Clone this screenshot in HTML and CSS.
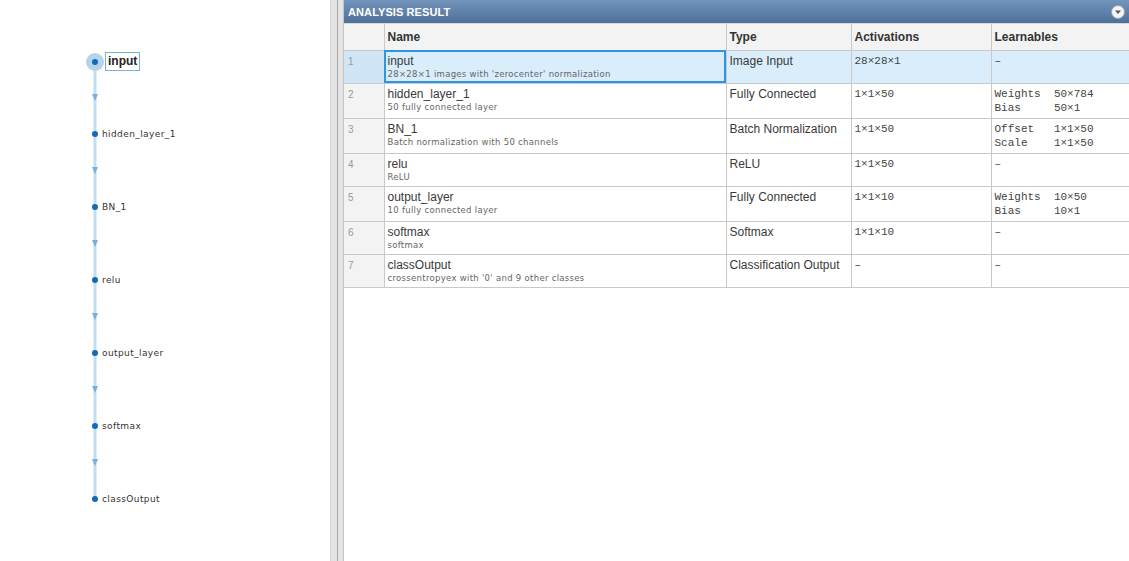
FILE: index.html
```html
<!DOCTYPE html>
<html>
<head>
<meta charset="utf-8">
<link rel="stylesheet" href="styles.css">
</head>
<body>
<div class="app">
  <div class="graph-panel">
    <div class="graph">
      <svg class="edges" width="330" height="561" viewBox="0 0 330 561">
        <line x1="95" y1="62" x2="95" y2="499" stroke="#c3ddf1" stroke-width="3"/>
        <g fill="#7aaedb">
          <polygon points="92,94 98,94 95,101"/>
          <polygon points="92,167 98,167 95,174"/>
          <polygon points="92,240 98,240 95,247"/>
          <polygon points="92,313 98,313 95,320"/>
          <polygon points="92,386 98,386 95,393"/>
          <polygon points="92,459 98,459 95,466"/>
        </g>
        <circle cx="95" cy="62" r="9" fill="#b5d4ec"/>
        <g fill="#1569b9">
          <circle cx="95" cy="62" r="3"/>
          <circle cx="95" cy="134" r="3"/>
          <circle cx="95" cy="207" r="3"/>
          <circle cx="95" cy="280" r="3"/>
          <circle cx="95" cy="353" r="3"/>
          <circle cx="95" cy="426" r="3"/>
          <circle cx="95" cy="499" r="3"/>
        </g>
      </svg>
      <span class="node-label selected" style="top:52px">input</span>
      <span class="node-label" style="top:128px">hidden_layer_1</span>
      <span class="node-label" style="top:201px">BN_1</span>
      <span class="node-label" style="top:274px">relu</span>
      <span class="node-label" style="top:347px">output_layer</span>
      <span class="node-label" style="top:420px">softmax</span>
      <span class="node-label" style="top:493px">classOutput</span>
    </div>
  </div>
  <div class="divider"><div class="divider-line"></div></div>
  <div class="result-panel">
    <div class="result-header">
      <span class="result-title">ANALYSIS RESULT</span>
      <span class="menu-btn"><svg width="14" height="14" viewBox="0 0 14 14"><circle cx="7" cy="7" r="6.5" fill="#f4f4f4" stroke="#9aa4b0"/><polygon points="4,5.5 10,5.5 7,9" fill="#555"/></svg></span>
    </div>
    <table class="layers">
      <colgroup>
        <col class="c-num"><col class="c-name"><col class="c-type"><col class="c-act"><col class="c-learn">
      </colgroup>
      <thead>
        <tr><th></th><th>Name</th><th>Type</th><th>Activations</th><th>Learnables</th></tr>
      </thead>
      <tbody>
        <tr class="sel r33">
          <td class="num">1</td>
          <td class="name focus"><div class="n-main">input</div><div class="n-sub">28×28×1 images with 'zerocenter' normalization</div></td>
          <td class="type">Image Input</td>
          <td class="mono">28×28×1</td>
          <td class="mono">–</td>
        </tr>
        <tr class="r35">
          <td class="num">2</td>
          <td class="name"><div class="n-main">hidden_layer_1</div><div class="n-sub">50 fully connected layer</div></td>
          <td class="type">Fully Connected</td>
          <td class="mono">1×1×50</td>
          <td class="mono">Weights  50×784<br>Bias     50×1</td>
        </tr>
        <tr class="r35">
          <td class="num">3</td>
          <td class="name"><div class="n-main">BN_1</div><div class="n-sub">Batch normalization with 50 channels</div></td>
          <td class="type">Batch Normalization</td>
          <td class="mono">1×1×50</td>
          <td class="mono">Offset   1×1×50<br>Scale    1×1×50</td>
        </tr>
        <tr class="r33">
          <td class="num">4</td>
          <td class="name"><div class="n-main">relu</div><div class="n-sub">ReLU</div></td>
          <td class="type">ReLU</td>
          <td class="mono">1×1×50</td>
          <td class="mono">–</td>
        </tr>
        <tr class="r35">
          <td class="num">5</td>
          <td class="name"><div class="n-main">output_layer</div><div class="n-sub">10 fully connected layer</div></td>
          <td class="type">Fully Connected</td>
          <td class="mono">1×1×10</td>
          <td class="mono">Weights  10×50<br>Bias     10×1</td>
        </tr>
        <tr class="r33">
          <td class="num">6</td>
          <td class="name"><div class="n-main">softmax</div><div class="n-sub">softmax</div></td>
          <td class="type">Softmax</td>
          <td class="mono">1×1×10</td>
          <td class="mono">–</td>
        </tr>
        <tr class="r33">
          <td class="num">7</td>
          <td class="name"><div class="n-main">classOutput</div><div class="n-sub">crossentropyex with '0' and 9 other classes</div></td>
          <td class="type">Classification Output</td>
          <td class="mono">–</td>
          <td class="mono">–</td>
        </tr>
      </tbody>
    </table>
  </div>
</div>
</body>
</html>
```

FILE: styles.css
```css
html, body {
  margin: 0;
  padding: 0;
  background: #ffffff;
}
body {
  font-family: "Liberation Sans", Arial, sans-serif;
  color: #333;
}
.app {
  display: flex;
  width: 1129px;
  height: 561px;
  overflow: hidden;
}
.graph-panel {
  width: 330px;
  flex: none;
  background: #fff;
}
.graph {
  position: relative;
  width: 330px;
  height: 561px;
}
.edges {
  position: absolute;
  left: 0;
  top: 0;
}
.node-label {
  position: absolute;
  left: 102px;
  font-family: "DejaVu Sans", Verdana, sans-serif;
  font-size: 9px;
  letter-spacing: 0.4px;
  line-height: 13px;
  color: #333;
  white-space: nowrap;
}
.node-label.selected {
  left: 105px;
  top: 52px;
  box-sizing: border-box;
  height: 19px;
  padding: 0 2px;
  border: 1px solid #7ab2de;
  background: #fff;
  font-family: "Liberation Sans", Arial, sans-serif;
  font-weight: bold;
  font-size: 12px;
  letter-spacing: 0;
  line-height: 17px;
  color: #222;
}
.divider {
  width: 13px;
  flex: none;
  background: #e4e4e4;
  border-left: 1px solid #d6d6d6;
  box-sizing: border-box;
  display: flex;
  justify-content: center;
}
.divider-line {
  width: 1px;
  background: #a9a9a9;
}
.result-panel {
  flex: 1;
  min-width: 0;
  display: flex;
  flex-direction: column;
  border-left: 1px solid #c4c4c4;
}
.result-header {
  height: 23px;
  flex: none;
  display: flex;
  align-items: center;
  justify-content: space-between;
  padding: 0 4px 0 4px;
  background: linear-gradient(#7395bc, #4f7099);
  border-bottom: 1px solid #d9d9d9;
}
.result-title {
  color: #fff;
  font-weight: bold;
  font-size: 11px;
  letter-spacing: 0.1px;
}
.menu-btn {
  display: flex;
}
.layers {
  border-collapse: collapse;
  table-layout: fixed;
  width: 786px;
}
.c-num { width: 40px; }
.c-name { width: 342px; }
.c-type { width: 125px; }
.c-act { width: 140px; }
.c-learn { width: 139px; }
.layers th {
  height: 26px;
  box-sizing: border-box;
  background: #f3f3f3;
  text-align: left;
  font-size: 12px;
  font-weight: bold;
  color: #333;
  padding: 1px 3px 0;
  border-right: 1px solid #c9c9c9;
  border-bottom: 1px solid #c9c9c9;
}
.layers td {
  vertical-align: top;
  padding: 4px 3px 0;
  border-right: 1px solid #c9c9c9;
  border-bottom: 1px solid #c9c9c9;
  font-size: 12px;
  line-height: 12px;
  color: #3a3a3a;
  box-sizing: border-box;
}
.layers th:last-child, .layers td:last-child {
  border-right: none;
}
.r33 td { height: 33px; }
.r35 td { height: 35px; }
.layers td.num {
  background: #f3f3f3;
  font-size: 10px;
  color: #999;
  padding-left: 4px;
  padding-top: 5px;
}
.n-main {
  font-size: 12px;
  line-height: 12px;
}
.n-sub {
  margin-top: 2px;
  font-family: "DejaVu Sans", Verdana, sans-serif;
  font-size: 8.5px;
  letter-spacing: 0.3px;
  line-height: 10px;
  color: #666;
}
.layers td.mono {
  font-family: "Liberation Mono", "Courier New", monospace;
  white-space: pre;
  font-size: 11px;
  line-height: 14px;
  padding-top: 3px;
  color: #444;
}
.sel td {
  background: #d9edfb;
}
.sel td.num {
  background: #d0e6f6;
}
.layers td.focus {
  outline: 2px solid #2d95e3;
  outline-offset: -2px;
}
```
